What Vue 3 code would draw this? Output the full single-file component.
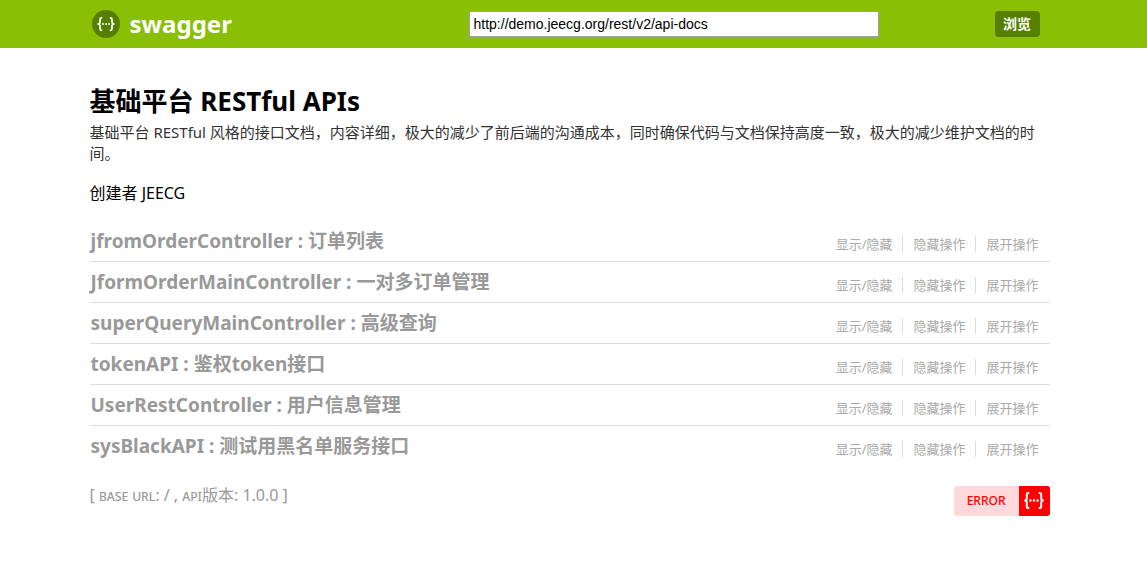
<script setup>
import { ref } from 'vue'

const url = ref('http://demo.jeecg.org/rest/v2/api-docs')
const resources = [
  'jfromOrderController : 订单列表',
  'JformOrderMainController : 一对多订单管理',
  'superQueryMainController : 高级查询',
  'tokenAPI : 鉴权token接口',
  'UserRestController : 用户信息管理',
  'sysBlackAPI : 测试用黑名单服务接口',
]
const actions = ['显示/隐藏', '隐藏操作', '展开操作']
</script>

<template>
  <header class="header">
    <form class="bar" @submit.prevent>
      <a class="logo" href="#">
        <svg class="mark" viewBox="0 0 28 28" aria-hidden="true">
          <circle cx="14" cy="14" r="14" fill="#547f00" />
          <g fill="none" stroke="#fff" stroke-width="1.7">
            <path d="M10.2 7.8H9.6Q8 7.8 8 9.4V12Q8 14 5.4 14Q8 14 8 16V18.8Q8 20.3 9.6 20.3H10.2" />
            <path d="M17.8 7.8H18.4Q20 7.8 20 9.4V12Q20 14 22.6 14Q20 14 20 16V18.8Q20 20.3 18.4 20.3H17.8" />
          </g>
          <g fill="#fff">
            <circle cx="11" cy="14" r="1" />
            <circle cx="14" cy="14" r="1" />
            <circle cx="17" cy="14" r="1" />
          </g>
        </svg>
        <span>swagger</span>
      </a>
      <input v-model="url" class="url" type="text" aria-label="API URL" />
      <button class="explore" type="submit">浏览</button>
    </form>
  </header>

  <main class="content">
    <h1 class="title">基础平台 RESTful APIs</h1>
    <p class="description">基础平台 RESTful 风格的接口文档，内容详细，极大的减少了前后端的沟通成本，同时确保代码与文档保持高度一致，极大的减少维护文档的时间。</p>
    <p class="creator">创建者 JEECG</p>

    <ul class="resources">
      <li v-for="name in resources" :key="name" class="resource">
        <h2 class="name"><a href="#">{{ name }}</a></h2>
        <ul class="actions">
          <li v-for="action in actions" :key="action" class="action">
            <a href="#">{{ action }}</a>
          </li>
        </ul>
      </li>
    </ul>

    <footer class="footer">
      <p class="info">[ <span class="caps">base url</span>: / , <span class="caps">api</span>版本: 1.0.0 ]</p>
      <a class="badge" href="#">
        <span class="badge-text">ERROR</span>
        <span class="badge-mark">
          <svg viewBox="0 0 22 20" aria-hidden="true">
            <g fill="none" stroke="#fff" stroke-width="2">
              <path d="M6.2 2H5.4Q3.8 2 3.8 3.8V7.4Q3.8 9.5 1.4 9.5Q3.8 9.5 3.8 11.6V15.2Q3.8 17 5.4 17H6.2" />
              <path d="M15.8 2H16.6Q18.2 2 18.2 3.8V7.4Q18.2 9.5 20.6 9.5Q18.2 9.5 18.2 11.6V15.2Q18.2 17 16.6 17H15.8" />
            </g>
            <g fill="#fff">
              <circle cx="7.4" cy="9.5" r="1.2" />
              <circle cx="11" cy="9.5" r="1.2" />
              <circle cx="14.6" cy="9.5" r="1.2" />
            </g>
          </svg>
        </span>
      </a>
    </footer>
  </main>
</template>

<style>
body {
  margin: 0;
  background: #fff;
  font-family: "Noto Sans", "Noto Sans CJK SC", sans-serif;
}
</style>

<style scoped>
a {
  color: inherit;
  text-decoration: none;
}

h1,
h2,
p,
ul {
  margin: 0;
  padding: 0;
}

ul {
  list-style: none;
}

.header,
.content {
  display: grid;
  grid-template-columns: minmax(0, 960px);
  justify-content: center;
  padding: 0 32px 0 24px;
}

.header {
  background: #89bf04;
}

.bar {
  display: grid;
  grid-template-columns: 1fr 410px 161px;
  align-items: center;
  box-sizing: border-box;
  height: 48px;
  padding: 0 10px 0 2px;
}

.logo {
  display: flex;
  align-items: center;
  gap: 10px;
  color: #fff;
  font-size: 24px;
  font-weight: 700;
  line-height: 32px;
}

.mark {
  width: 28px;
  height: 28px;
}

.url {
  box-sizing: border-box;
  width: 100%;
  height: 26px;
  padding: 0 4px;
  border: 1px solid #a0a0a0;
  background: #fff;
  color: #000;
  font-family: "Liberation Sans", Arial, sans-serif;
  font-size: 14px;
}

.explore {
  justify-self: end;
  min-width: 45px;
  height: 26px;
  padding: 0 8px;
  border: 0;
  border-radius: 4px;
  background: #547f00;
  color: #fff;
  font-family: inherit;
  font-size: 14px;
  font-weight: 700;
  line-height: 26px;
}

.content {
  padding-top: 36px;
  padding-bottom: 24px;
}

.title {
  font-size: 26px;
  font-weight: 700;
  line-height: 34px;
}

.description {
  padding: 4px 0;
  color: #333;
  font-size: 15px;
  line-height: 21px;
}

.creator {
  padding-top: 13px;
  font-size: 16px;
  line-height: 24px;
}

.resources {
  padding-top: 16px;
}

.resource {
  display: flex;
  justify-content: space-between;
  height: 40px;
  border-bottom: 1px solid #ddd;
  color: #999;
}

.resource:last-child {
  border-bottom: 0;
}

.name {
  padding-left: 1px;
  font-size: 19px;
  font-weight: 700;
  line-height: 40px;
}

.actions {
  display: flex;
  padding: 15px 1px 0 0;
}

.action {
  height: 16px;
  padding: 0 10px;
  border-right: 1px solid #ddd;
  color: #aaa;
  font-size: 13px;
  line-height: 16px;
}

.action:last-child {
  border-right: 0;
}

.footer {
  display: flex;
  justify-content: space-between;
  align-items: flex-start;
  padding-top: 20px;
}

.info {
  color: #999;
  font-size: 16px;
  line-height: 18px;
}

.caps {
  font-size: 15px;
  font-variant: small-caps;
}

.badge {
  display: flex;
  height: 30px;
  overflow: hidden;
  border-radius: 3px;
  background: #ffd9dc;
  color: #f00;
  font-size: 12px;
  font-weight: 500;
  line-height: 30px;
}

.badge-text {
  padding: 0 13px;
}

.badge-mark {
  display: flex;
  align-items: center;
  justify-content: center;
  width: 31px;
  background: #f00;
}

.badge-mark svg {
  width: 22px;
  height: 20px;
}
</style>
